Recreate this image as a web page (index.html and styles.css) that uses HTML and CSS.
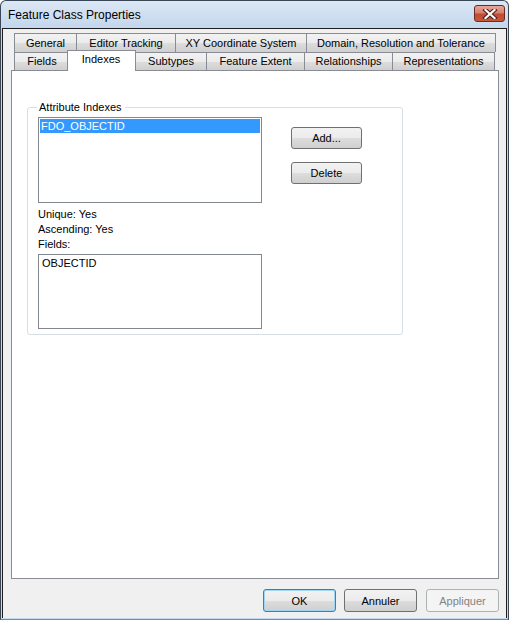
FILE: index.html
```html
<!DOCTYPE html>
<html lang="en">
  <head>
    <meta charset="utf-8">
    <title>Feature Class Properties</title>
    <link rel="stylesheet" href="styles.css">
  </head>
  <body>

  <div class="window">
    <div class="titlebar">
      <span class="caption">Feature Class Properties</span>
      <button class="close" title="Close">
        <svg width="16" height="10" viewBox="0 0 16 10">
          <path d="M3.5 1 L12.5 9 M12.5 1 L3.5 9" stroke="#4a1d18" stroke-width="4.2" stroke-linecap="square"/>
          <path d="M3.5 1 L12.5 9 M12.5 1 L3.5 9" stroke="#ffffff" stroke-width="2.2" stroke-linecap="square"/>
        </svg>
      </button>
    </div>

    <div class="client">
      <!-- two rows of tabs, the selected one sits on the row next to the page -->
      <div class="tabs">
        <div class="tabrow">
          <div class="tab" style="width:63px">General</div>
          <div class="tab" style="width:100px">Editor Tracking</div>
          <div class="tab" style="width:132px">XY Coordinate System</div>
          <div class="tab" style="width:190px">Domain, Resolution and Tolerance</div>
        </div>
        <div class="tabrow">
          <div class="tab" style="width:56px">Fields</div>
          <div class="tab selected" style="width:69px">Indexes</div>
          <div class="tab" style="width:72px">Subtypes</div>
          <div class="tab" style="width:99px">Feature Extent</div>
          <div class="tab" style="width:89px">Relationships</div>
          <div class="tab" style="width:103px">Representations</div>
        </div>
      </div>

      <div class="page">
        <fieldset class="group">
          <legend>Attribute Indexes</legend>
          <div class="group-body">
            <div class="col">
              <div class="listbox indexes">
                <div class="item active">FDO_OBJECTID</div>
              </div>
              <div class="info">
                <div>Unique: Yes</div>
                <div>Ascending: Yes</div>
                <div>Fields:</div>
              </div>
              <div class="listbox fields">
                <div class="item">OBJECTID</div>
              </div>
            </div>
            <div class="actions">
              <button class="btn">Add...</button>
              <button class="btn">Delete</button>
            </div>
          </div>
        </fieldset>
      </div>

      <div class="footer">
        <button class="btn wide default">OK</button>
        <button class="btn wide">Annuler</button>
        <button class="btn wide" disabled>Appliquer</button>
      </div>
    </div>
  </div>

  </body>
</html>
```

FILE: styles.css
```css
html {
  height: 100%;
}
body {
  margin: 0;
  padding: 0;
  background: #ffffff;
  font-family: "Liberation Sans", Arial, sans-serif;
  font-size: 11px;
  color: #000000;
}

.window {
  width: 507px;
  height: 618px;
  border: 1px solid #3a4757;
  border-bottom-color: #2aa6de;
  border-radius: 6px 6px 0 0;
  background: linear-gradient(#dbe7f4, #c3d6ec 28px, #c6d8ee);
  display: flex;
  flex-direction: column;
}

.titlebar {
  height: 27px;
  display: flex;
  align-items: center;
  justify-content: space-between;
  padding: 0 3px 0 7px;
}
.caption {
  font-size: 12px;
  margin-top: 1px;
}
.close {
  width: 31px;
  height: 17px;
  margin-top: -2px;
  padding: 0;
  border: 1px solid #6b2b24;
  border-radius: 3px;
  background: linear-gradient(#e6a69a, #d4826f 45%, #c14a33 55%, #c8573c);
  display: flex;
  align-items: center;
  justify-content: center;
}

.client {
  flex: 1;
  margin: 0 1px 1px 1px;
  border: 1px solid #1e1e1e;
  border-bottom: none;
  background: #f0f0f0;
  padding: 4px 7px 0 8px;
  display: flex;
  flex-direction: column;
}

.tabs {
  padding-left: 3px;
}
.tabrow {
  display: flex;
}
.tab {
  box-sizing: border-box;
  height: 19px;
  border: 1px solid #898c95;
  border-bottom: none;
  margin-right: -1px;
  background: linear-gradient(#f2f2f2, #ebebeb 50%, #dddddd 51%, #cfcfcf);
  text-align: center;
  line-height: 18px;
  white-space: nowrap;
}
.tabrow + .tabrow .tab {
  height: 18px;
  line-height: 17px;
}
.tabrow + .tabrow .tab.selected {
  position: relative;
  z-index: 1;
  height: 21px;
  margin: -2px -1px -1px -2px;
  padding-right: 1px;
  background: #ffffff;
  line-height: 17px;
}

.page {
  height: 507px;
  border: 1px solid #898c95;
  background: #ffffff;
}

.group {
  margin: 30px 0 0 15px;
  width: 376px;
  height: 234px;
  box-sizing: border-box;
  border: 1px solid #d5dfe5;
  border-radius: 3px;
  padding: 0 10px;
}
.group legend {
  padding: 0 3px 0 2px;
  margin-left: -1px;
}
.group-body {
  display: flex;
  margin-top: 4px;
}
.col {
  width: 224px;
}

.listbox {
  box-sizing: border-box;
  border: 1px solid #828790;
  background: #ffffff;
  padding: 1px;
}
.indexes {
  height: 86px;
}
.fields {
  height: 75px;
  padding: 1px 2px;
}
.item {
  height: 14px;
  line-height: 14px;
  padding-left: 1px;
}
.item.active {
  background: #3399ff;
  color: #ffffff;
}
.info {
  padding: 4px 0 2px;
}
.info div {
  line-height: 15px;
}

.actions {
  display: flex;
  flex-direction: column;
  gap: 13px;
  margin: 10px 0 0 29px;
}
.btn {
  width: 71px;
  height: 22px;
  padding: 0;
  border: 1px solid #707070;
  border-radius: 3px;
  background: linear-gradient(#f2f2f2, #ebebeb 50%, #dddddd 51%, #cfcfcf);
  font-family: "Liberation Sans", Arial, sans-serif;
  font-size: 11px;
  color: #000000;
}
.btn.wide {
  width: 73px;
  height: 23px;
}
.btn.default {
  border-color: #3c7fb1;
  box-shadow: inset 0 0 0 1px #9fd6f5;
}
.btn:disabled {
  border-color: #adb2b5;
  background: #f4f4f4;
  color: #838383;
}

.footer {
  display: flex;
  justify-content: flex-end;
  gap: 8px;
  padding: 10px 0 0;
}
.footer .btn:nth-child(2) {
  margin-right: 1px;
}
```
